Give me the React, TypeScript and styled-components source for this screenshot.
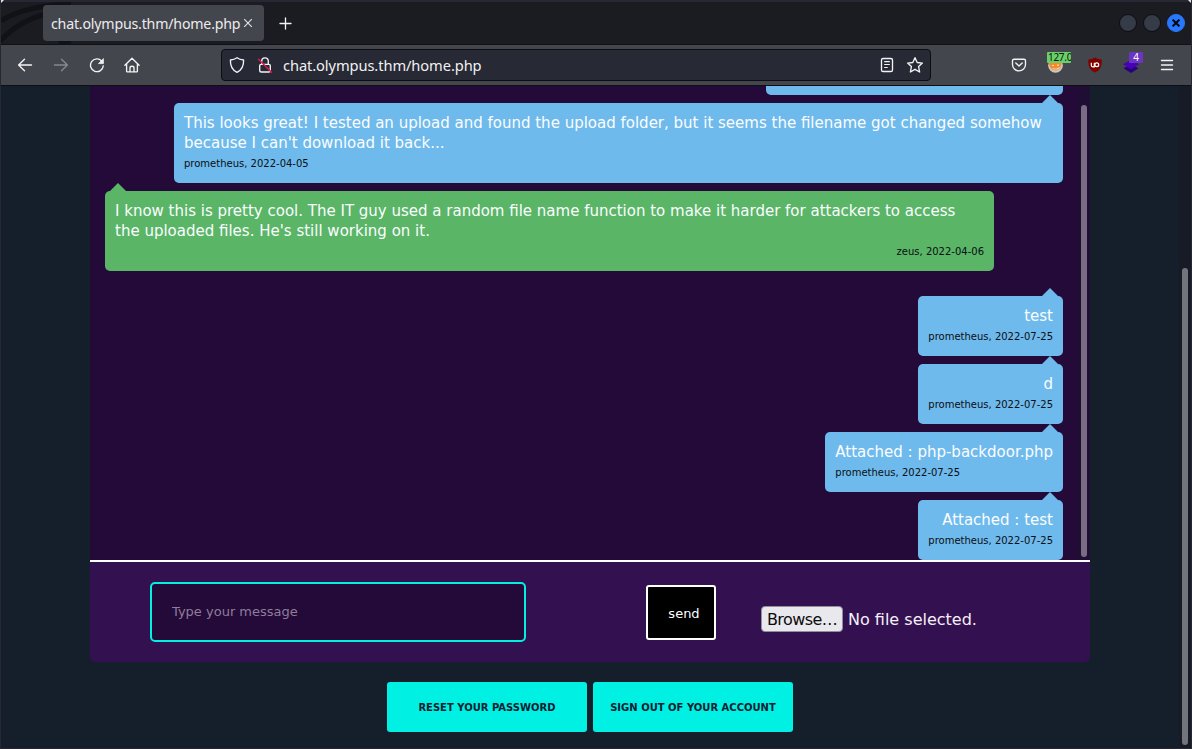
import React from "react";
import styled, { createGlobalStyle, css } from "styled-components";

const GlobalStyle = createGlobalStyle`
  * { box-sizing: border-box; }
  html, body { margin: 0; padding: 0; background: #2a2b36; overflow: hidden; }
  button, input { font-family: inherit; margin: 0; }
`;

const Window = styled.div`
  width: 1192px;
  height: 749px;
  display: flex;
  flex-direction: column;
  overflow: hidden;
  border: 1px solid #262733;
  border-top: 0;
  background: #151e2b;
  font-family: "DejaVu Sans", sans-serif;
`;

const TitleBar = styled.header`
  position: relative;
  height: 45px;
  flex: none;
  display: flex;
  align-items: flex-start;
  padding: 5px 6px 0 42px;
  background: #1b1c21;
  border-top: 2px solid #262733;
  border-bottom: 1px solid #101116;
  font-family: "Noto Sans", sans-serif;
`;

const Swirl = styled.svg`
  position: absolute;
  left: 0;
  top: 0;
`;

const Corner = styled.svg<{ $side: "left" | "right" }>`
  position: absolute;
  top: -2px;
  ${(p) => (p.$side === "left" ? "left: -1px;" : "right: -1px;")}
`;

const Tab = styled.div`
  position: relative;
  width: 221px;
  height: 36px;
  margin-top: -2px;
  display: flex;
  align-items: center;
  padding: 0 11px 0 8px;
  justify-content: space-between;
  border-radius: 4px;
  background: #44464d;
  color: #ececee;
  font-size: 14.2px;
  letter-spacing: -0.2px;
  line-height: 20px;
  white-space: nowrap;
`;

const TabTitle = styled.span`
  padding-top: 2px;
`;

const NewTab = styled.svg`
  margin: 10px 0 0 15px;
`;

const WindowControls = styled.div`
  display: flex;
  gap: 6px;
  margin: 7px 0 0 auto;
`;

const Control = styled.span<{ $close?: boolean }>`
  width: 18px;
  height: 18px;
  border-radius: 50%;
  display: grid;
  place-items: center;
  border: 1px solid ${(p) => (p.$close ? "#2777ff" : "#0c0d12")};
  background: ${(p) => (p.$close ? "#2777ff" : "#363b48")};
`;

const Toolbar = styled.nav`
  height: 41px;
  flex: none;
  display: flex;
  align-items: center;
  padding: 0 15px 0 16px;
  background: #44464d;
  border-bottom: 1px solid #0e0f14;
`;

const NavIcons = styled.div`
  display: flex;
  gap: 19.8px;
  width: 204px;
`;

const AddressBar = styled.div`
  width: 710px;
  height: 32px;
  display: flex;
  align-items: center;
  padding: 0 6px;
  border: 1px solid #0c0d12;
  border-radius: 4px;
  background: #272934;
  color: #f1f1f3;
  font-family: "Noto Sans", sans-serif;
  font-size: 14.67px;
`;

const Url = styled.span`
  flex: 1;
  line-height: 20px;
  margin-left: 10px;
  letter-spacing: -0.09px;
`;

const IconSlot = styled.span<{ $gap?: number }>`
  display: flex;
  margin-left: ${(p) => p.$gap ?? 0}px;
`;

const Extensions = styled.div`
  display: flex;
  align-items: center;
  margin-left: auto;
  gap: 18px;
`;

const Extension = styled.div<{ $spaced?: boolean }>`
  position: relative;
  width: 18px;
  height: 20px;
  display: flex;
  align-items: center;
  justify-content: center;
  ${(p) => p.$spaced && "margin-left: 4px;"}
`;

const ExtBadge = styled.span<{ $tone: "green" | "purple" }>`
  position: absolute;
  top: -3px;
  height: 11px;
  overflow: hidden;
  border-radius: 1px;
  font-family: "Noto Sans", sans-serif;
  font-size: 10px;
  line-height: 11px;
  white-space: nowrap;
  ${(p) =>
    p.$tone === "green"
      ? css`
          left: 1px;
          width: 24px;
          padding-left: 1px;
          letter-spacing: -0.3px;
          background: #69d069;
          color: #0b160b;
        `
      : css`
          left: 7px;
          width: 14px;
          text-align: center;
          background: #6a35c0;
          color: #fff;
        `}
`;

const Viewport = styled.div`
  flex: 1;
  min-height: 0;
  display: flex;
`;

const PageBody = styled.main`
  flex: 1;
  padding-left: 89px;
  display: flex;
  flex-direction: column;
`;

const ScrollTrack = styled.div<{ $page?: boolean }>`
  flex: none;
  display: flex;
  justify-content: flex-end;
  width: ${(p) => (p.$page ? 12 : 13)}px;
  padding: ${(p) => (p.$page ? "182px 3px 3px 0" : "19px 3px 3px 0")};
  background: ${(p) => (p.$page ? "#171b25" : "#200d33")};
`;

const ScrollThumb = styled.div<{ $page?: boolean }>`
  width: 6px;
  border-radius: 3px;
  background: ${(p) => (p.$page ? "#73747c" : "#7b6b84")};
`;

const Chat = styled.section`
  width: 1000px;
  height: 474px;
  flex: none;
  display: flex;
  background: #240a38;
`;

const Messages = styled.div`
  flex: 1;
  display: flex;
  flex-direction: column;
  justify-content: flex-end;
  align-items: flex-end;
  gap: 8px;
  overflow: hidden;
  padding: 0 14px 0 15px;
`;

const Bubble = styled.article<{ $zeus?: boolean; $wide?: boolean }>`
  position: relative;
  flex: none;
  padding: 10px;
  border-radius: 5px;
  white-space: nowrap;
  background: ${(p) => (p.$zeus ? "#5ab567" : "#6fbaec")};
  ${(p) => p.$wide && "width: 889px;"}
  ${(p) => p.$zeus && "align-self: flex-start; margin-bottom: 17px;"}

  &::before {
    content: "";
    position: absolute;
    top: -8px;
    ${(p) => (p.$zeus ? "left: 5px;" : "right: 5px;")}
    border: 8px solid transparent;
    border-top: 0;
    border-bottom-color: ${(p) => (p.$zeus ? "#5ab567" : "#6fbaec")};
  }
`;

const EarlierBubble = styled.div`
  flex: none;
  width: 297px;
  height: 60px;
  border-radius: 5px;
  background: #6fbaec;
`;

const Text = styled.p<{ $end?: boolean }>`
  margin: 0;
  color: #fbfdff;
  font-size: 15px;
  line-height: 20px;
  text-align: ${(p) => (p.$end ? "right" : "left")};
`;

const Meta = styled.p<{ $end?: boolean }>`
  margin: 0;
  height: 20px;
  color: #0a0f14;
  font-size: 10px;
  line-height: 22px;
  text-align: ${(p) => (p.$end ? "right" : "left")};
`;

const Composer = styled.form`
  width: 1000px;
  height: 102px;
  flex: none;
  display: flex;
  align-items: flex-start;
  padding: 20px 0 0 60px;
  border-top: 2px solid #fff;
  border-radius: 0 0 5px 5px;
  background: #331050;
`;

const MessageInput = styled.input`
  width: 376px;
  height: 60px;
  padding: 0 20px 2px;
  border: 2px solid #00f0e2;
  border-radius: 5px;
  background: #240a38;
  color: #fff;
  font-size: 13px;
  &::placeholder { color: #8f7d9c; opacity: 1; }
`;

const SendButton = styled.button`
  width: 70px;
  height: 55px;
  margin: 3px 0 0 120px;
  padding: 1px 0 0 6px;
  border: 2px solid #fff;
  border-radius: 3px;
  background: #000;
  color: #fff;
  font-size: 13px;
`;

const FilePicker = styled.div`
  display: flex;
  align-items: center;
  gap: 5px;
  margin: 24px 0 0 45px;
  color: #f4f0f6;
  font-size: 16px;
  line-height: 22px;
  white-space: nowrap;
`;

const BrowseButton = styled.button`
  width: 82px;
  height: 26px;
  padding: 2px 0 0;
  border: 1px solid #8f8f9d;
  border-radius: 4px;
  background: #e9e9ed;
  color: #0c0c0e;
  font-size: 16px;
  letter-spacing: -0.6px;
  line-height: 20px;
`;

const FileStatus = styled.span`
  padding-top: 2px;
`;

const Actions = styled.div`
  display: flex;
  gap: 6px;
  margin: 20px 0 0 297px;
`;

const ActionButton = styled.button`
  width: 200px;
  height: 50px;
  padding: 0;
  border: 0;
  border-radius: 3px;
  background: #00f0e4;
  color: #0f2030;
  font-size: 10px;
  font-weight: 700;
  text-transform: uppercase;
  white-space: nowrap;
`;

type Message = {
  lines: string[];
  meta: string;
  zeus?: boolean;
  wide?: boolean;
  textEnd?: boolean;
  metaEnd?: boolean;
};

const messages: Message[] = [
  {
    lines: [
      "This looks great! I tested an upload and found the upload folder, but it seems the filename got changed somehow",
      "because I can't download it back...",
    ],
    meta: "prometheus, 2022-04-05",
    wide: true,
  },
  {
    lines: [
      "I know this is pretty cool. The IT guy used a random file name function to make it harder for attackers to access",
      "the uploaded files. He's still working on it.",
    ],
    meta: "zeus, 2022-04-06",
    zeus: true,
    wide: true,
    metaEnd: true,
  },
  { lines: ["test"], meta: "prometheus, 2022-07-25", textEnd: true },
  { lines: ["d"], meta: "prometheus, 2022-07-25", textEnd: true },
  { lines: ["Attached : php-backdoor.php"], meta: "prometheus, 2022-07-25" },
  { lines: ["Attached : test"], meta: "prometheus, 2022-07-25", textEnd: true },
];

const stroke = {
  fill: "none",
  stroke: "#f3f3f5",
  strokeWidth: 1.35,
  strokeLinecap: "round" as const,
  strokeLinejoin: "round" as const,
};

const BackIcon = () => (
  <svg width="16" height="16" viewBox="0 0 16 16" {...stroke}>
    <path d="M14.5 8H1.8M7.5 2.2 1.6 8l5.9 5.8" />
  </svg>
);
const ForwardIcon = () => (
  <svg width="16" height="16" viewBox="0 0 16 16" {...stroke} stroke="#87888d">
    <path d="M1.5 8h12.7M8.5 2.2 14.4 8l-5.9 5.8" />
  </svg>
);
const ReloadIcon = () => (
  <svg width="16" height="16" viewBox="0 0 16 16" {...stroke}>
    <path d="M12.7 4A6.4 6.4 0 1 0 14.3 8.8" />
    <path d="M14.4 2v4.6H9.8z" fill="#f3f3f5" strokeWidth="0.8" />
  </svg>
);
const HomeIcon = () => (
  <svg width="16" height="16" viewBox="0 0 16 16" {...stroke}>
    <path d="M.9 8.3 8 1.2l7.1 7.1M2.6 7v7.2c0 .4.3.7.7.7h9.4c.4 0 .7-.3.7-.7V7" />
    <path d="M6 14.5v-3.6c0-1 .7-1.7 2-1.7s2 .7 2 1.7v3.6" />
  </svg>
);
const ShieldIcon = () => (
  <svg width="18" height="18" viewBox="0 0 18 18" {...stroke}>
    <path d="M9 1.7c2 1.5 4.1 2 6.6 2.3.2 5.5-1 9.7-6.6 12.3C3.4 13.7 2.2 9.5 2.4 4 4.9 3.7 7 3.2 9 1.7z" />
  </svg>
);
const LockOffIcon = () => (
  <svg width="16" height="18" viewBox="0 0 16 18" {...stroke}>
    <rect x="2.7" y="8.3" width="10.6" height="7.7" rx="1.5" />
    <path d="M4.7 8V5.2a3.3 3.3 0 0 1 6.6 0V8" />
    <path d="M1.5 3.3 14.5 16.2" stroke="#e3194d" strokeWidth="1.5" />
  </svg>
);
const ReaderIcon = () => (
  <svg width="16" height="16" viewBox="0 0 16 16" {...stroke}>
    <rect x="2.5" y="1.5" width="11" height="13" rx="1.6" />
    <path d="M5.2 4.7h5.6M5.2 7.5h5.6M5.2 10.5h3.5" strokeWidth="1.2" strokeLinecap="butt" />
  </svg>
);
const StarIcon = () => (
  <svg width="18" height="18" viewBox="0 0 18 18" {...stroke}>
    <path d="m9 1.7 2.2 4.8 5.2.6-3.8 3.5 1 5.4L9 13.3 4.4 16l1-5.400L1.6 7.1l5.200-.6z" />
  </svg>
);
const PocketIcon = () => (
  <svg width="16" height="16" viewBox="0 0 16 16" {...stroke}>
    <path d="M3 2.2h10c1 0 1.5.5 1.5 1.500v3.700a6.500 6.500 0 0 1-13 0V3.700c0-1 .5-1.500 1.500-1.500z" />
    <path d="m4.8 6 3.2 3 3.2-3" />
  </svg>
);
const FoxIcon = () => (
  <svg width="18" height="18" viewBox="0 0 18 18">
    <circle cx="9.5" cy="9.3" r="7.4" fill="#c9c7c3" />
    <path d="M3 6h12.500c.5 4-1.500 8-6 8.500C5 14 2.800 10 3 6z" fill="#f58a2a" />
    <path d="M6 12c2 .6 3 .2 4 .8l2.500-1.300 1.500-.5c-1 2-2.300 2.500-4 2.500S7 13.200 6 12z" fill="#f7d9b5" />
    <path d="M6 9.500h2M11 9.200h2" stroke="#ffe0b8" strokeWidth="1.2" />
  </svg>
);
const UblockIcon = () => (
  <svg width="16" height="16" viewBox="0 0 16 16">
    <path d="M8 .6c2 1.300 4 1.800 6.700 1.800C14.900 9 13.500 12.800 8 15.600 2.500 12.800 1.100 9 1.300 2.400 4 2.400 6 1.900 8 .6z" fill="#800000" />
    <path d="M4.300 5.700v2.600c0 1 .5 1.500 1.400 1.500h1.600V5.700" fill="none" stroke="#fff" strokeWidth="1.2" />
    <circle cx="9.800" cy="7.800" r="1.900" fill="none" stroke="#fff" strokeWidth="1.2" />
  </svg>
);
const LayersIcon = () => (
  <svg width="18" height="18" viewBox="0 0 18 18">
    <path d="m1.500 12.300 7.500-4 7.500 4L9 17z" fill="#24037a" />
    <path d="m1 8.300 8-4.600 8 4.600-8 4.900z" fill="#4a00b4" />
  </svg>
);
const MenuIcon = () => (
  <svg width="14" height="14" viewBox="0 0 14 14" {...stroke}>
    <path d="M1.500 2.500h11M1.500 7h11M1.500 11.500h11" />
  </svg>
);

export default function App() {
  return (
    <>
      <GlobalStyle />
      <Window>
        <TitleBar>
          <Swirl width="110" height="42" viewBox="0 0 110 42" fill="none" stroke="#111217">
            <path d="M0 19C17 8 39 3 70 2" strokeWidth="5" />
            <path d="M-1 39C14 24 27 16 50 11" strokeWidth="5" />
            <path d="M59 43q4-2 9-6" strokeWidth="9" />
          </Swirl>
          <Corner $side="left" width="5" height="5">
            <path d="M0 0h4L0 4z" fill="#e9e9ec" />
          </Corner>
          <Corner $side="right" width="5" height="5">
            <path d="M1 0h4v4z" fill="#e9e9ec" />
          </Corner>
          <Tab>
            <TabTitle>chat.olympus.thm/home.php</TabTitle>
            <svg width="10" height="10" viewBox="0 0 10 10" stroke="#e4e4e7" strokeWidth="1.1">
              <path d="m1.200 1.200 7.600 7.600M8.800 1.200 1.200 8.800" />
            </svg>
          </Tab>
          <NewTab width="14" height="14" viewBox="0 0 14 14" {...stroke}>
            <path d="M6.500 1v11M1 6.500h11" />
          </NewTab>
          <WindowControls>
            <Control />
            <Control />
            <Control $close>
              <svg width="8" height="8" viewBox="0 0 8 8" stroke="#05070d" strokeWidth="2">
                <path d="m.6.6 6.8 6.8M7.4.6.6 7.4" />
              </svg>
            </Control>
          </WindowControls>
        </TitleBar>
        <Toolbar>
          <NavIcons>
            <BackIcon />
            <ForwardIcon />
            <ReloadIcon />
            <HomeIcon />
          </NavIcons>
          <AddressBar>
            <ShieldIcon />
            <IconSlot $gap={11}>
              <LockOffIcon />
            </IconSlot>
            <Url>chat.olympus.thm/home.php</Url>
            <ReaderIcon />
            <IconSlot $gap={11}>
              <StarIcon />
            </IconSlot>
          </AddressBar>
          <Extensions>
            <Extension>
              <PocketIcon />
            </Extension>
            <Extension>
              <FoxIcon />
              <ExtBadge $tone="green">127.0</ExtBadge>
            </Extension>
            <Extension $spaced>
              <UblockIcon />
            </Extension>
            <Extension>
              <LayersIcon />
              <ExtBadge $tone="purple">4</ExtBadge>
            </Extension>
            <Extension>
              <MenuIcon />
            </Extension>
          </Extensions>
        </Toolbar>
        <Viewport>
          <PageBody>
            <Chat>
              <Messages>
                <EarlierBubble />
                {messages.map((m, i) => (
                  <Bubble key={i} $zeus={m.zeus} $wide={m.wide}>
                    {m.lines.map((line) => (
                      <Text key={line} $end={m.textEnd}>
                        {line}
                      </Text>
                    ))}
                    <Meta $end={m.metaEnd}>{m.meta}</Meta>
                  </Bubble>
                ))}
              </Messages>
              <ScrollTrack>
                <ScrollThumb />
              </ScrollTrack>
            </Chat>
            <Composer>
              <MessageInput placeholder="Type your message" />
              <SendButton type="button">send</SendButton>
              <FilePicker>
                <BrowseButton type="button">Browse…</BrowseButton>
                <FileStatus>No file selected.</FileStatus>
              </FilePicker>
            </Composer>
            <Actions>
              <ActionButton>Reset your password</ActionButton>
              <ActionButton>Sign out of your account</ActionButton>
            </Actions>
          </PageBody>
          <ScrollTrack $page>
            <ScrollThumb $page />
          </ScrollTrack>
        </Viewport>
      </Window>
    </>
  );
}
